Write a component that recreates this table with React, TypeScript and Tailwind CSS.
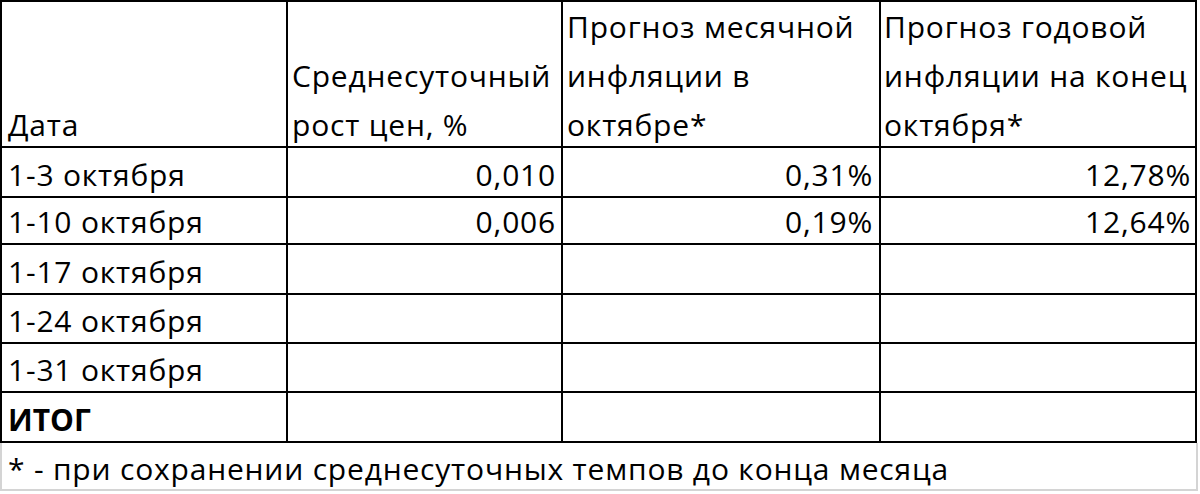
import React from "react";

const font = { fontFamily: '"Open Sans", "Noto Sans", sans-serif' };

const rows: { date: string; a: string; b: string; c: string; h: string; bold?: boolean }[] = [
  { date: "1-3 октября", a: "0,010", b: "0,31%", c: "12,78%", h: "h-[48px]" },
  { date: "1-10 октября", a: "0,006", b: "0,19%", c: "12,64%", h: "h-[45px]" },
  { date: "1-17 октября", a: "", b: "", c: "", h: "h-[48px]" },
  { date: "1-24 октября", a: "", b: "", c: "", h: "h-[47px]" },
  { date: "1-31 октября", a: "", b: "", c: "", h: "h-[47px]" },
  { date: "ИТОГ", a: "", b: "", c: "", h: "h-[48px]", bold: true },
];

export default function App() {
  return (
    <div className="w-[1200px] h-[494px] bg-white text-black" style={font}>
      <div className="w-[1197px] bg-black p-[2px] grid grid-cols-[284px_273px_316px_314px] gap-[2px] text-[30px] tracking-[0.8px]">
        <div className="h-[144px] bg-white flex items-end pl-[6px] leading-[49px]">
          <span className="block translate-y-[3px]">Дата</span>
        </div>
        <div className="h-[144px] bg-white flex items-end pl-[4px] leading-[49px] whitespace-nowrap">
          <span className="block translate-y-[3px]">Среднесуточный<br />рост цен, %</span>
        </div>
        <div className="h-[144px] bg-white flex items-end pl-[4px] leading-[49px] whitespace-nowrap">
          <span className="block translate-y-[3px]">Прогноз месячной<br />инфляции в<br />октябре*</span>
        </div>
        <div className="h-[144px] bg-white flex items-end pl-[3px] leading-[49px] whitespace-nowrap">
          <span className="block translate-y-[3px]">Прогноз годовой<br />инфляции на конец<br />октября*</span>
        </div>
        {rows.map((r) => (
          <React.Fragment key={r.date}>
            <div className={`${r.h} bg-white flex items-end pl-[6px] pb-[1px] leading-[40px] ${r.bold ? "font-bold tracking-normal" : ""}`}>
              {r.date}
            </div>
            <div className={`${r.h} bg-white flex items-end justify-end pr-[5px] pb-[1px] leading-[40px]`}>{r.a}</div>
            <div className={`${r.h} bg-white flex items-end justify-end pr-[6px] pb-[1px] leading-[40px]`}>{r.b}</div>
            <div className={`${r.h} bg-white flex items-end justify-end pr-[4px] pb-[1px] leading-[40px]`}>{r.c}</div>
          </React.Fragment>
        ))}
      </div>
      <div className="w-[1198px] h-[48px] border-x-2 border-b-2 border-[#d4d4d4] flex items-end pl-[6px] pb-0 text-[30px] tracking-[0.8px] leading-[40px] whitespace-nowrap">
        * - при сохранении среднесуточных темпов до конца месяца
      </div>
    </div>
  );
}
